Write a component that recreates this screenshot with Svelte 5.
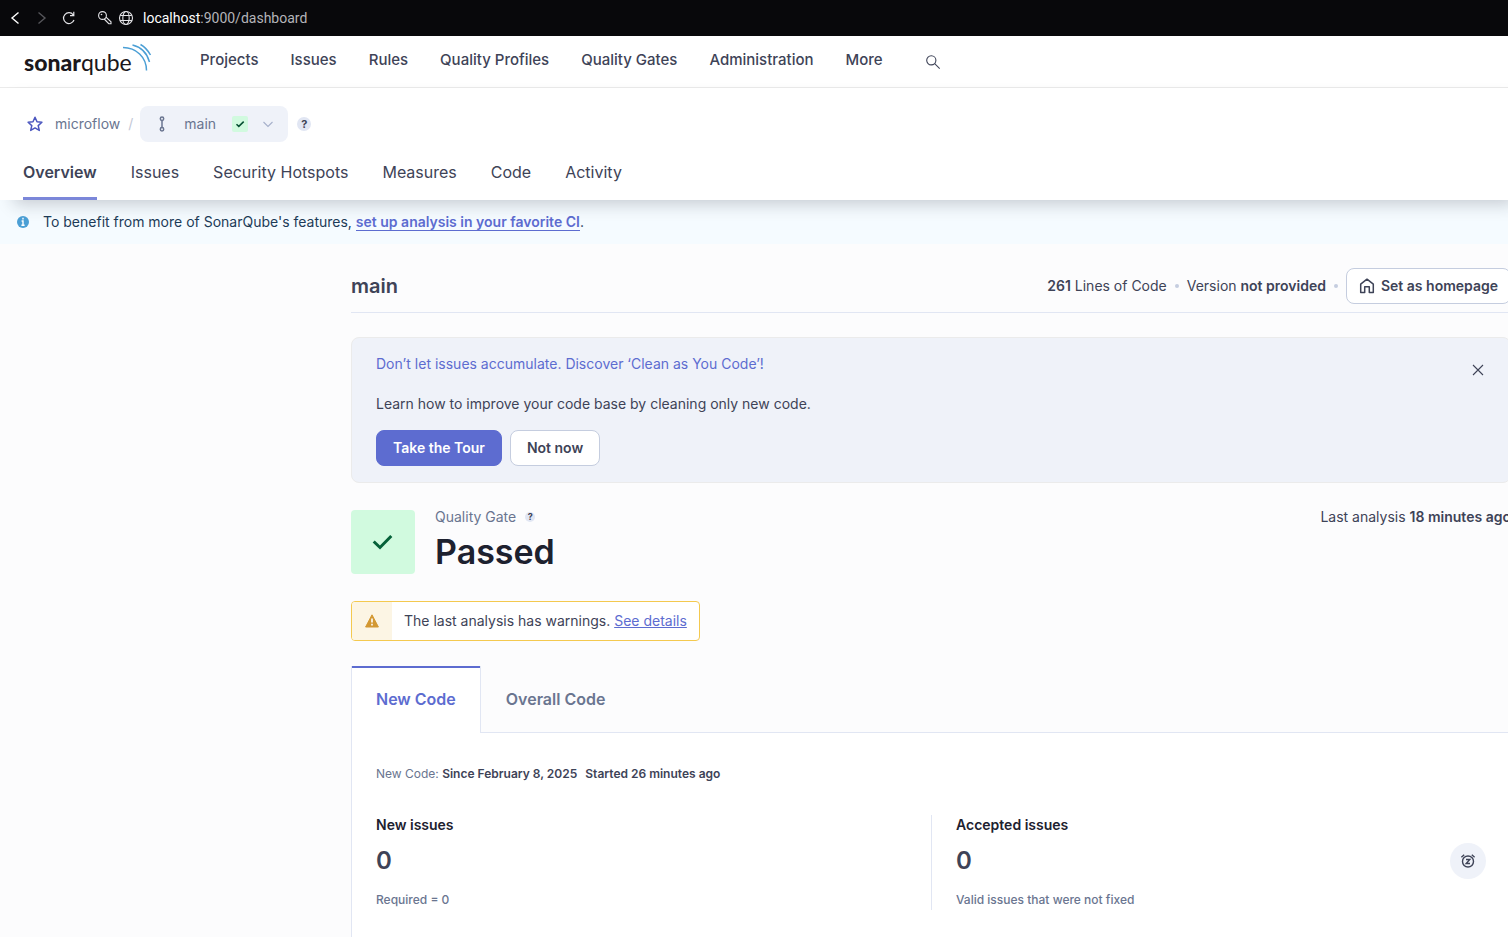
<script>
  const mainNav = ['Projects', 'Issues', 'Rules', 'Quality Profiles', 'Quality Gates', 'Administration', 'More'];
  const tabs = ['Overview', 'Issues', 'Security Hotspots', 'Measures', 'Code', 'Activity'];
</script>

<div class="page">
  <div class="browser">
    <button class="plain" aria-label="Back"><svg width="14" height="16" viewBox="0 0 14 16"><path d="M9.500 2.500 3 8l6.500 5.500" stroke="#fff" stroke-width="1.400" /></svg></button>
    <button class="plain" aria-label="Forward"><svg width="14" height="16" viewBox="0 0 14 16"><path d="M3.500 2.500 10 8l-6.500 5.500" stroke="#55555a" stroke-width="1.400" /></svg></button>
    <button class="plain" aria-label="Reload"><svg width="16" height="16" viewBox="0 0 16 16"><path d="M13 10a5.400 5.400 0 1 1-.8-5.200M12.800 1.800v3.800H9" stroke="#e4e4e8" stroke-width="1.200" /></svg></button>
    <svg class="key" width="16" height="16" viewBox="0 0 16 16"><circle cx="5.500" cy="5.500" r="3.900" stroke="#e4e4e8" stroke-width="1.100" /><circle cx="4.500" cy="4.500" r=".8" fill="#e4e4e8" /><path d="m9 7.200 5 4.600v1.900h-2.200L7.200 9" stroke="#e4e4e8" stroke-width="1.100" /></svg>
    <svg class="globe" width="16" height="16" viewBox="0 0 16 16"><g stroke="#e4e4e8" stroke-width="1.100"><circle cx="8" cy="8" r="6.500" /><ellipse cx="8" cy="8" rx="3.200" ry="6.500" /><path d="M2.200 5.500h11.600M2.200 10.500h11.600" /></g></svg>
    <span class="url"><b>localhost</b>:9000/dashboard</span>
  </div>

  <nav class="global">
    <a class="logo" href="#home" aria-label="sonarqube">
      <span class="sonar">sonar</span><span class="qube">qube</span>
      <svg width="30" height="30" viewBox="0 0 30 30"><g stroke="#4b9fd5" stroke-width="1.500"><path d="M1 4.500C14 4.500 24.500 14 24.500 27.500" /><path d="M10.500 2C19 4 25 10 27.500 19" /><path d="M18.500 1.500C23 4 26 7.500 28.500 12" /></g></svg>
    </a>
    <div class="links">
      {#each mainNav as item}<a href="#{item}">{item}</a>{/each}
    </div>
    <button class="plain search" aria-label="Search"><svg width="16" height="16" viewBox="0 0 16 16"><g stroke="#3e4357" stroke-width="1.100"><circle cx="6.300" cy="6.300" r="4.600" /><path d="m9.700 9.700 5 5" /></g></svg></button>
  </nav>

  <header>
    <div class="crumbs">
      <button class="plain" aria-label="Favorite"><svg width="16" height="16" viewBox="0 0 16 16"><path d="m8 1.300 2 4.500 4.900.5-3.700 3.300 1.100 4.800L8 11.900l-4.300 2.500 1.100-4.800-3.700-3.300 4.900-.5z" stroke="#4b56bf" stroke-width="1.500" stroke-linejoin="round" /></svg></button>
      <a href="#microflow">microflow</a>
      <span class="slash">/</span>
      <button class="branch">
        <svg width="16" height="16" viewBox="0 0 16 16"><g stroke="#6a7590" stroke-width="1.500"><circle cx="8" cy="2.800" r="1.700" /><circle cx="8" cy="13.200" r="1.700" /><path d="M8 4.500v7" /></g></svg>
        <span>main</span>
        <svg width="16" height="16" viewBox="0 0 16 16"><rect width="16" height="16" rx="2" fill="#d1fadf" /><path d="m4.500 8.200 2.300 2.200 4.900-4.800" stroke="#054f31" stroke-width="1.500" /></svg>
        <svg class="chev" width="16" height="16" viewBox="0 0 16 16"><path d="m3.500 6 4.500 4.500L12.500 6" stroke="#a6b0cb" stroke-width="1.100" /></svg>
      </button>
      <span class="help">?</span>
    </div>
    <div class="tabs">
      {#each tabs as tab, i}<a href="#{tab}" class:active={i === 0}>{tab}</a>{/each}
    </div>
  </header>

  <div class="notice">
    <svg width="14" height="14" viewBox="0 0 14 14"><circle cx="7" cy="7" r="6" fill="#4b9fd5" /><path d="M7 2.800v1.800M5.600 6h1.400v4M5.400 10.200h3.200" stroke="#fff" stroke-width="1.400" /></svg>
    <span>To benefit from more of SonarQube's features, <a href="#ci">set up analysis in your favorite CI</a>.</span>
  </div>

  <main>
    <div class="title">
      <h1>main</h1>
      <span><b>261</b> Lines of Code</span><i class="dot"></i>
      <span>Version <b>not provided</b></span><i class="dot"></i>
      <button class="btn"><svg width="16" height="16" viewBox="0 0 16 16"><path d="M1.700 6.200 8 1.200l6.300 5v8.300h-4V8.800H5.700v5.700h-4z" stroke="#3e4357" stroke-width="1.500" stroke-linejoin="round" /></svg>Set as homepage</button>
    </div>

    <section class="promo">
      <div>
        <p class="lead">Don’t let issues accumulate. Discover ‘Clean as You Code’!</p>
        <p class="body">Learn how to improve your code base by cleaning only new code.</p>
        <div class="actions"><button class="btn primary">Take the Tour</button><button class="btn">Not now</button></div>
      </div>
      <button class="plain close" aria-label="Close"><svg width="16" height="16" viewBox="0 0 16 16"><path d="m3 3 10 10M13 3 3 13" stroke="#3e4357" stroke-width="1.100" /></svg></button>
    </section>

    <section class="gate">
      <svg width="64" height="64" viewBox="0 0 64 64"><rect width="64" height="64" rx="4" fill="#d1fadf" /><path d="m22.700 31.500 6.300 6 11.300-11.500" stroke="#056139" stroke-width="3" /></svg>
      <div class="status">
        <div class="label">Quality Gate <span class="help small">?</span></div>
        <strong>Passed</strong>
      </div>
      <span class="last">Last analysis <b>18 minutes ago</b></span>
    </section>

    <div class="warning">
      <span class="wicon"><svg width="14" height="14" viewBox="0 0 14 14"><path d="M7 .8 13.400 13H.6z" fill="#d39832" stroke="#d39832" stroke-linejoin="round" /><path d="M7 4.500v4M7 9.800v1.700" stroke="#fff" stroke-width="1.600" /></svg></span>
      <span class="wtext">The last analysis has warnings. <a href="#details">See details</a></span>
    </div>

    <div class="codetabs"><button class="on">New Code</button><button>Overall Code</button></div>
    <section class="panel">
      <p class="period">New Code: <b>Since February 8, 2025</b><b>Started 26 minutes ago</b></p>
      <div class="measures">
        <div class="measure"><h2>New issues</h2><strong>0</strong><small>Required = 0</small></div>
        <div class="measure second">
          <div><h2>Accepted issues</h2><strong>0</strong><small>Valid issues that were not fixed</small></div>
          <span class="snooze"><svg width="16" height="16" viewBox="0 0 16 16"><g stroke="#3e4357" stroke-width="1.400"><circle cx="8" cy="8.500" r="5.500" /><path d="M1.400 4.200 4.200 1.800M14.600 4.200l-2.800-2.400M6 6.500h3.800L6.200 10.500H10" /></g></svg></span>
        </div>
      </div>
    </section>
  </main>
</div>

<style>
  :global(body) { background: #fcfcfd; overflow: hidden; }
  .page { font: 400 14px/20px Inter, sans-serif; color: #3e4357; min-height: 100vh; overflow: hidden; }
  * { box-sizing: border-box; }
  svg { display: block; fill: none; flex: none; }
  a { color: inherit; text-decoration: none; }
  button { font: inherit; color: inherit; }
  p, h1, h2 { margin: 0; }
  b { font-weight: 600; }
  .plain { border: 0; padding: 0; background: none; }

  .browser { display: flex; align-items: center; height: 36px; padding: 0 9px; gap: 12px; background: #08080b; }
  .browser .key { margin-left: 8px; }
  .browser .globe { margin-left: -7px; }
  .url { margin-left: -3px; font-family: Roboto, sans-serif; color: #b4b4b9; }
  .url b { font-weight: 400; color: #fff; }

  .global { display: flex; align-items: center; height: 52px; padding-left: 24px; background: #fff; border-bottom: 1px solid #ebebeb; }
  .logo { display: flex; width: 176px; font: 23px/28px Lato, sans-serif; color: #1b171b; }
  .sonar { font-weight: 900; }
  .qube { font-weight: 400; }
  .logo svg { margin: -5px 0 0 -10px; }
  .links { display: flex; gap: 32px; font-size: 15px; font-weight: 500; margin-top: -4px; }
  .search { margin-left: 42px; }

  header { position: relative; background: #fff; padding: 18px 23px 0; height: 112px; box-shadow: 10px 8px 16px -4px rgba(29, 33, 47, 0.22); }
  .crumbs { display: flex; align-items: center; color: #6a7590; padding-left: 4px; }
  .crumbs > a { margin-left: 12px; }
  .slash { margin: 0 7px 0 8px; color: #c3c8d6; }
  .branch { display: flex; align-items: center; height: 36px; width: 148px; padding: 0 12px 0 14px; border: 0; border-radius: 8px; background: #eff2f9; }
  .branch span { margin: 0 16px 0 14px; }
  .chev { margin-left: 12px; }
  .help { display: grid; place-items: center; width: 14px; height: 14px; margin-left: 9px; border-radius: 50%; background: #e1e6f3; color: #3e4357; font-size: 11px; line-height: 14px; font-weight: 700; }
  .tabs { display: flex; gap: 34px; margin-top: 13px; font-size: 16px; line-height: 24px; }
  .tabs a { height: 45px; padding-top: 5px; }
  .tabs .active { font-weight: 600; border-bottom: 3px solid #7b87d9; }

  .notice { display: flex; align-items: center; gap: 13px; height: 44px; padding-left: 16px; background: #f5fbff; color: #1d3b58; }
  .notice a { font-weight: 600; color: #5d6cd0; border-bottom: 1px solid #5d6cd0; }

  main { width: 1160px; margin-left: 351px; padding-top: 24px; }
  .title { display: flex; align-items: center; padding-bottom: 8px; border-bottom: 1px solid #e1e6f3; }
  h1 { flex: 1; font-size: 20px; line-height: 28px; font-weight: 600; }
  .dot { width: 4px; height: 4px; margin: 0 8px; border-radius: 50%; background: #c5cddf; }
  .btn { display: flex; align-items: center; gap: 6px; height: 36px; padding: 0 16px; border: 1px solid #c5cddf; border-radius: 8px; background: #fff; font-weight: 600; }
  .title .btn { padding: 0 12px; }
  .btn.primary { background: #5d6cd0; border-color: #5d6cd0; color: #fff; }

  .promo { display: flex; justify-content: space-between; margin-top: 24px; padding: 16px 24px; border: 1px solid #ebebeb; border-radius: 8px; background: #eff2f9; }
  .lead { color: #5d6cd0; }
  .body { margin: 20px 0 16px; }
  .actions { display: flex; gap: 8px; }
  .close { height: 32px; }

  .gate { display: flex; margin-top: 27px; }
  .status { flex: 1; margin: -3px 0 0 20px; }
  .label { display: flex; color: #6a7590; align-items: center; }
  .small { width: 10px; height: 10px; font-size: 9px; line-height: 10px; }
  .status strong { display: block; margin-top: 3px; font-size: 34px; line-height: 44px; font-weight: 600; color: #1d212f; }
  .last { margin-top: -3px; }

  .warning { display: inline-flex; margin-top: 27px; height: 40px; border: 1px solid #f4c94f; border-radius: 4px; background: #fff; overflow: hidden; vertical-align: top; }
  .wicon { display: grid; place-items: center; width: 40px; background: #fcf5e4; }
  .wtext { padding: 9px 12px; }
  .wtext a { color: #5d6cd0; text-decoration: underline; }

  .codetabs { display: flex; margin-top: 25px; height: 67px; box-shadow: inset 0 -1px #e1e6f3; }
  .codetabs button { padding: 0 25px 2px; border: 0; background: none; font-size: 16px; font-weight: 600; color: #6a7590; }
  .codetabs .on { padding: 0 24px 2px; border: 1px solid #e1e6f3; border-width: 0 1px; box-shadow: inset 0 2px #5d6cd0; background: #fff; color: #5d6cd0; }
  .panel { padding: 31px 24px; border: 1px solid #e1e6f3; border-top: 0; background: #fff; }
  .period { font-size: 12px; color: #6a7590; }
  .period b { color: #3e4357; margin-right: 8px; }
  .measures { display: grid; grid-template-columns: 1fr 1fr; margin-top: 31px; }
  .measure { height: 95px; }
  .second { display: flex; justify-content: space-between; padding-left: 24px; border-left: 1px solid #e1e6f3; }
  h2 { font-size: 14px; line-height: 20px; font-weight: 600; color: #1d212f; }
  .measure strong { display: block; margin: 10px 0 11px; font-size: 24px; line-height: 32px; font-weight: 600; }
  small { display: block; font-size: 12px; line-height: 24px; font-weight: 500; color: #6a7590; }
  .snooze { display: grid; place-items: center; width: 36px; height: 36px; margin-top: 28px; border-radius: 50%; background: #eff2f9; }
</style>
